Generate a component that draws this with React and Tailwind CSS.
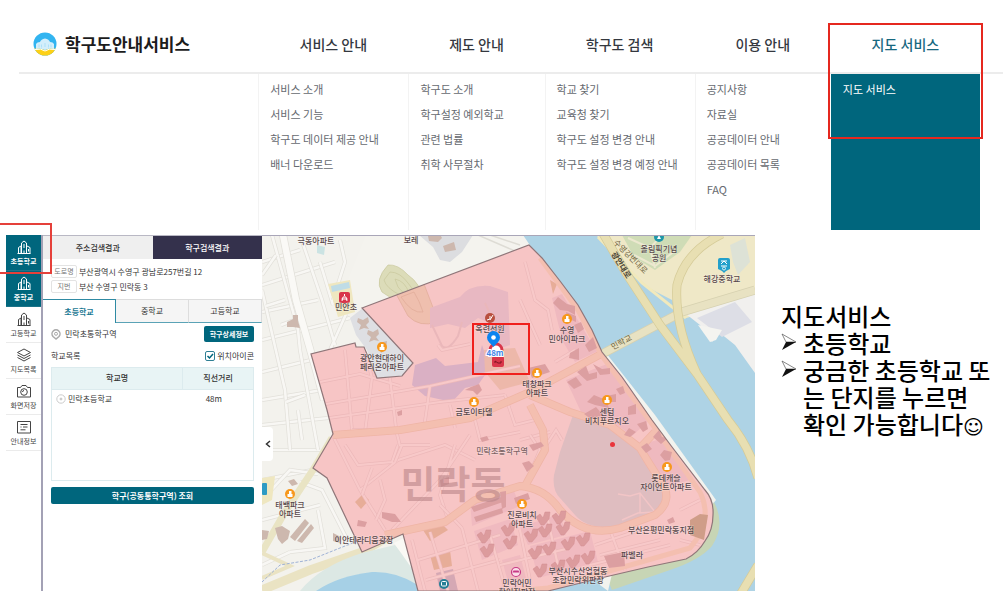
import React, { useState } from 'react'
import clsx from 'clsx'

const menus = [
  { title: '서비스 안내', items: ['서비스 소개', '서비스 기능', '학구도 데이터 제공 안내', '배너 다운로드'] },
  { title: '제도 안내', items: ['학구도 소개', '학구설정 예외학교', '관련 법률', '취학 사무절차'] },
  { title: '학구도 검색', items: ['학교 찾기', '교육청 찾기', '학구도 설정 변경 안내', '학구도 설정 변경 예정 안내'] },
  { title: '이용 안내', items: ['공지사항', '자료실', '공공데이터 안내', '공공데이터 목록', 'FAQ'] },
  { title: '지도 서비스', items: ['지도 서비스'], active: true },
]

const Logo = () => (
  <svg viewBox="0 0 24 24" className="w-6 h-6" aria-hidden="true">
    <clipPath id="logoClip"><circle cx="12" cy="12" r="11.5" /></clipPath>
    <g clipPath="url(#logoClip)">
      <rect width="24" height="24" fill="#32b4f0" />
      <path d="M0 17q6-2 12 1q6-3 12-1v7H0z" fill="#fdd017" />
      <path d="M3 17v-5q1-2 4-2q1-3 5-3.500q4 .5 5 3.500q3 0 4 2v5q-5-1.500-9 1q-4-2.500-9-1z" fill="#d3eefb" />
      <path d="M6 12.500v3M8.500 12.500v3M15.500 12.500v3M18 12.500v3M12 11v4" stroke="#a5dcf6" strokeWidth=".8" fill="none" />
      <path d="M2 17.500q6-1.500 10 1.500q4-3 10-1.500" stroke="#fff" fill="none" />
    </g>
  </svg>
)

const SchoolIcon = () => (
  <path d="M1.500 14.500h13M2.500 14.500V8.500L5 7v7.500M5.500 14.500V4L8 2l2.500 2v10.500M11 7l3 1.500v6M8 14.500v-3M8 5v4M12.500 10v2.500" />
)
const LayersIcon = () => (
  <path d="M8 2l6.500 3.500L8 9 1.500 5.500zM1.500 8L8 11.500 14.500 8M1.500 10.500L8 14l6.500-3.500" />
)
const CameraIcon = () => (
  <>
    <path d="M1.500 4.500h3L6 2.500h4l1.500 2h3V14h-13z" />
    <circle cx="8" cy="9" r="3.300" />
    <path d="M8 7.500a1.500 1.500 0 0 0-1.500 1.500" />
  </>
)
const InfoIcon = () => (
  <path d="M1.500 2.500h13v11.500h-13zM4.500 5.500h7M7 8h4.500M4.500 8h1M4.500 10.800h5" />
)

const tools = [
  { label: '초등학교', icon: <SchoolIcon />, active: true },
  { label: '중학교', icon: <SchoolIcon />, active: true },
  { label: '고등학교', icon: <SchoolIcon /> },
  { label: '지도목록', icon: <LayersIcon /> },
  { label: '화면저장', icon: <CameraIcon /> },
  { label: '안내정보', icon: <InfoIcon /> },
]

const Header = () => (
  <header className="relative pt-[15px] ml-[19px]">
    <div className="grid grid-cols-[239fr_150fr_136fr_150fr_136fr_149fr_23fr] h-[59px] border-b-2 border-[#ececec] items-center">
      <a href="#home" className="flex items-center gap-2 pl-3.5 text-[17px] font-bold text-[#1c1c1c] whitespace-nowrap">
        <Logo />
        학구도안내서비스
      </a>
      {menus.map((menu) => (
        <a
          key={menu.title}
          href="#menu"
          className={clsx('text-center text-sm font-medium whitespace-nowrap', menu.active ? 'text-[#17687f]' : 'text-[#34383f]')}
        >
          {menu.title}
        </a>
      ))}
    </div>
    <nav className="grid grid-cols-[239fr_150fr_136fr_150fr_136fr_149fr_23fr] h-[156px]">
      <div />
      {menus.map((menu) => (
        <ul
          key={menu.title}
          className={clsx(
            'pt-[3px] pl-[11px] border-l text-[11px] leading-[25px] whitespace-nowrap',
            menu.active ? 'bg-[#00667d] border-[#00667d] text-white' : 'border-[#f3f3f3] text-[#666a70]'
          )}
        >
          {menu.items.map((item) => (
            <li key={item}><a href="#item">{item}</a></li>
          ))}
        </ul>
      ))}
    </nav>
    {/* highlight around the map menu */}
    <div className="absolute top-[23px] right-[2%] w-[155px] h-[116px] border-2 border-[#e5281f]" />
  </header>
)

const Sidebar = () => (
  <aside className="relative w-[37px] shrink-0 border-r-2 border-[#a3a1b5]">
    {tools.map((tool) => (
      <button
        key={tool.label}
        type="button"
        className={clsx(
          'w-full h-9 flex flex-col items-center justify-center gap-px border-b text-[7px] leading-[10px] whitespace-nowrap',
          tool.active ? 'bg-[#00667d] border-[#1b7489] text-white font-bold' : 'bg-white border-[#ebebeb] text-[#444]'
        )}
      >
        <svg viewBox="0 0 16 16" className="w-4 h-4" fill="none" stroke="currentColor" strokeWidth="1" aria-hidden="true">
          {tool.icon}
        </svg>
        {tool.label}
      </button>
    ))}
    <div className="absolute -top-3 -left-2 w-[54px] h-[51px] border-2 border-[#e5403a]" />
  </aside>
)

const addresses = [
  ['도로명', '부산광역시 수영구 광남로257번길 12'],
  ['지번', '부산 수영구 민락동 3'],
]

const Panel = () => {
  const [tab, setTab] = useState('초등학교')
  const [showIcon, setShowIcon] = useState(true)

  return (
    <section className="w-[219px] shrink-0 text-[8px] leading-3 text-[#333]">
      <div className="grid grid-cols-2 h-6 border-t border-[#b9b8c4] font-medium">
        <button type="button" className="bg-[#efefef]">주소검색결과</button>
        <button type="button" className="bg-[#34314c] text-white">학구검색결과</button>
      </div>

      <dl className="py-[5px] pl-2">
        {addresses.map(([label, value]) => (
          <div key={label} className="flex items-center h-[15px] gap-0.5">
            <dt className="w-[26px] h-[13px] text-center border border-[#e3e3e3] rounded-xs text-[7px] leading-[11px] text-[#777]">{label}</dt>
            <dd className="whitespace-nowrap">{value}</dd>
          </div>
        ))}
      </dl>

      <div className="grid grid-cols-3 h-6">
        {['초등학교', '중학교', '고등학교'].map((name) => (
          <button
            key={name}
            type="button"
            onClick={() => setTab(name)}
            className={clsx(
              'border-t border-r',
              tab === name
                ? 'bg-white border-[#2f8aa3] text-[#1a7893] font-bold'
                : 'bg-[#f5f5f5] border-t-[#ddd] border-r-[#ddd] border-b border-b-[#5aa3b6]'
            )}
          >
            {name}
          </button>
        ))}
      </div>

      <div className="px-2">
        <div className="flex items-center justify-between h-[22px]">
          <span className="flex items-center gap-1">
            <svg viewBox="0 0 10 11" className="w-2.5 h-[11px]" fill="none" stroke="#aaa" strokeWidth="1.500" aria-hidden="true">
              <path d="M5 10L2 7.500a4 4 0 1 1 6 0z" />
              <circle cx="5" cy="4.800" r="1.500" strokeWidth="1" />
            </svg>
            민락초통학구역
          </span>
          <button type="button" className="w-[50px] h-4 rounded-xs bg-[#00667d] text-white font-bold text-[7px] whitespace-nowrap">
            학구상세정보
          </button>
        </div>
        <div className="flex items-center justify-between h-[22px]">
          <span>학교목록</span>
          <label className="relative flex items-center gap-0.5">
            <input
              type="checkbox"
              checked={showIcon}
              onChange={() => setShowIcon(!showIcon)}
              className="peer appearance-none w-2.5 h-2.5 rounded-xs border border-[#2f7f94] bg-white"
            />
            <svg viewBox="0 0 10 10" className="absolute left-0 w-2.5 h-2.5 hidden peer-checked:block" fill="none" stroke="#00667d" strokeWidth="1.500" aria-hidden="true">
              <path d="M2.500 5l2 2 3.500-4" />
            </svg>
            위치아이콘
          </label>
        </div>

        <div className="h-[114px] border border-[#dcebee]">
          <table className="w-full">
            <thead>
              <tr className="h-[21px] bg-[#e8f4f5] border-b border-[#dcebee]">
                <th className="w-[65%] font-medium border-r border-[#dcebee]">학교명</th>
                <th className="font-medium">직선거리</th>
              </tr>
            </thead>
            <tbody>
              <tr className="h-5">
                <td>
                  <span className="flex items-center gap-0.5 pl-1">
                    <svg viewBox="0 0 10 10" className="w-2.5 h-2.5" fill="none" stroke="#ccc" aria-hidden="true">
                      <circle cx="5" cy="5" r="4.200" />
                      <circle cx="5" cy="5" r="1" fill="#bbb" />
                    </svg>
                    민락초등학교
                  </span>
                </td>
                <td className="text-center pr-2">48m</td>
              </tr>
            </tbody>
          </table>
        </div>

        <button type="button" className="mt-1.5 w-full h-[17px] rounded-xs bg-[#00667d] text-white font-bold">
          학구(공동통학구역) 조회
        </button>
      </div>
    </section>
  )
}

const ZONE =
  'M362 308L529 245L542 258L560 281L578 305L592 330L602 352L622 377L652 420L672 447L705 490Q714 500 713 515Q713 530 705 541Q698 553 686 559L648 567L605 577L548 591H418L403 534L362 552L327 478L313 468L333 434L327 410L311 354L355 343L356 347L364 347L377 378L402 376L413 363Z'

// minor streets outside the school zone
const streets = [
  'M262 285L335 262M262 312L318 300M262 262L300 250M262 340L350 318M262 372L311 360M262 400L322 390M262 425L328 418M262 450L320 450',
  'M300 235L322 300L335 345M272 235L298 330L300 350L318 450M262 290L285 390L290 450M320 262L333 305M346 314L330 350M262 480L312 470',
  'M262 520L320 505M300 482L322 490L350 545M290 552L325 548L318 510M262 565L290 552M262 500L290 470L318 474M340 240L345 262L333 300',
  'M276 255L262 275M285 300L266 306M281 325L300 318M305 395L286 402M298 410L302 440',
]

// streets that run under the tinted zone
const zoneStreets = [
  'M326 404L430 386L520 366M329 418L440 402L505 395M320 382L360 374L400 386M345 350L352 430M365 350L372 378L365 432M390 378L396 428M430 386L424 428',
  'M450 405L455 428M470 400L480 440L520 432M505 395L515 425L535 420M333 436L360 490L385 530M345 445L358 465L392 462L398 445M360 490L398 460L445 445L475 460',
  'M395 462L402 445L430 445M352 430L396 430L400 446M380 480L385 500L376 520M392 530L440 480L470 435M372 468L362 495M455 445L440 495L448 520',
  'M412 540L425 591M430 532L448 591M462 528L478 591M418 560L500 535M426 580L500 560M440 505L462 528',
  'M490 535L506 591M520 530L530 580M548 520L560 575M500 565L570 548M595 545L640 530M600 555L660 540M590 565L670 545M610 530L625 570',
  'M438 345L442 350L470 344M540 455L556 430L562 440M520 440L550 432M525 262L535 300L548 310L552 330M520 300L540 345M555 362L575 350',
  'M530 435L540 450L528 478M680 510L700 500M680 540L700 545',
]

const zoneRoads = 'M333 435L400 430L470 418L530 392L603 353M385 535L445 522L475 500L520 486Q545 488 560 510Q585 538 620 528L655 515Q675 500 660 480Q648 462 640 448L610 425L570 412L530 395M525 486L545 450L543 430L530 405M640 448L655 432'

const buildings = [
  'M358 318l5 2 5-3 1 5-3 3 3 4-5-1-5 2 2-5-4-3zM368 330l5 2 5-3 1 5-3 3 3 4-5-1-5 2 2-5-4-3zM379 343l8-2-1 8-5 4z',
  'M287 322l6-3v-4h5v6l2 7-7-1-6 0zM428 236l12-2 2 4-4 4-9-1zM443 246l11-4 2 8-11 2z',
  'M262 530l7 1-2 8-5 1zM275 528l7-2 8 5-2 8-6 5-4-5zM290 537l15-18 4 4-14 18zM297 541l14-17 3 4-12 15zM288 481l6-2 4 5-6 2zM333 533l8 4-1 6-7-2z',
]

const zoneBuildings = [
  'M553 303l5-6 9 7 8 2v9l-7-4-8-1zM566 312l10 4v6l-9-4zM574 325l7-3 3 7-6 4zM585 345l8-8 4 11-8 4zM570 353l9-5 0 12-10-2z',
  'M528 368l17-4 5 8-18 6zM577 372l9-6 3 8 8-2 0 6-10 3zM593 364l9 5 8-1 0 6-10 1zM606 396l10-2 0 8-8 0zM567 382l9-5 6 8-8 4zM587 402l7-7 12 5 3 8-14-3z',
  'M584 414l12-7 7 8-12 4zM616 389l7-3 2 7-5 2zM628 407l8-3 0 10-8 1zM624 435l5-7 7 4-6 5zM637 424l9-3 2 8-5 3zM641 447l6-4 5 6-6 4zM653 437l6-7 3 7 6 1-7 6zM660 455l4-5 8 2-2 8-5 1z',
  'M529 445l12-3 3 4-11 5zM522 463l7-2 5 5-7 6zM440 480l9-3 0 7-8 3zM480 438l7-2 2 4-7 2zM471 507l30-10 2 5-29 10zM474 517l28-9 1 5-27 9zM500 492l6-1 0 16-4 2zM382 512l13 2 6 8-9 0-10-4z',
  'M465 390l6-3 8-3 3 6-5 5-4-4zM397 412l5-2 0 5-4 1zM358 520l9 2-2 5-8-1zM514 498l14-5 2 6-14 5zM604 556l20-4 1 14-16 2zM667 520l6-3 2 5-6 2z',
]

const vBlocks = [
  [484, 538], [508, 531], [487, 552], [510, 544], [531, 537], [545, 532], [543, 520], [559, 519], [563, 530],
  [535, 554], [549, 550], [568, 545], [583, 541], [540, 572], [558, 568], [573, 563], [588, 559],
]

const places = [
  { x: 316, y: 244, lines: ['극동아파트'] },
  { x: 411, y: 243, lines: ['보레'] },
  { x: 346, y: 310, lines: ['민안초'] },
  { x: 382, y: 361, lines: ['광안현대하이', '페리온아파트'] },
  { x: 490, y: 332, lines: ['옥련선원'] },
  { x: 567, y: 333, lines: ['수영', '민아이파크'] },
  { x: 537, y: 387, lines: ['태창파크', '아파트'] },
  { x: 474, y: 415, lines: ['금토이타델'] },
  { x: 607, y: 415, lines: ['센텀', '비치푸르지오'] },
  { x: 502, y: 454, lines: ['민락초통학구역'], light: true },
  { x: 290, y: 508, lines: ['태백파크', '아파트'] },
  { x: 364, y: 543, lines: ['이안테라디움광장'] },
  { x: 522, y: 518, lines: ['진로비치', '아파트'] },
  { x: 666, y: 481, lines: ['롯데캐슬', '자이언트아파트'] },
  { x: 661, y: 533, lines: ['부산은평민락동지점'] },
  { x: 632, y: 558, lines: ['파벨라'] },
  { x: 578, y: 574, lines: ['부산시수산업협동', '조합민락위판장'] },
  { x: 517, y: 586, lines: ['민락어민', '활어직판장'] },
  { x: 659, y: 252, lines: ['올림픽기념', '공원'] },
  { x: 722, y: 282, lines: ['해강중학교'] },
]

const apartments = [[382, 347], [567, 319], [537, 373], [474, 402], [607, 400], [290, 494], [522, 504], [667, 467]]

const SchoolMap = () => (
  <div className="relative flex-1 min-w-0">
    <svg viewBox="262 235 493 356" className="block w-full h-auto" role="img" aria-label="민락동 학구 지도">
      <rect x="262" y="235" width="493" height="356" fill="#f3f2ed" />

      {/* streets */}
      {streets.map((d) => (
        <g key={d} fill="none">
          <path d={d} stroke="#e2e0da" strokeWidth="4" />
          <path d={d} stroke="#f8f7f4" strokeWidth="2.600" />
        </g>
      ))}
      <path d="M283 235L296 300L316 370L324 400" stroke="#e2e0da" strokeWidth="8" fill="none" />
      <path d="M283 235L296 300L316 370L324 400" stroke="#faf9f6" strokeWidth="6.500" fill="none" />
      <path d="M262 552L285 512L313 470L332 438" stroke="#e9e4c4" strokeWidth="7" fill="none" />
      <path d="M262 590L310 570L362 552L400 530" stroke="#eae3c3" strokeWidth="9" fill="none" />
      <path d="M262 553L290 566L262 578" stroke="#eae3c3" strokeWidth="4" fill="none" />
      <path d="M262 582L280 565L310 560L385 530" stroke="#9fb2d6" strokeWidth="1" strokeDasharray="3 1.500" fill="none" />

      {/* school ground, hill and apartment lots */}
      <path d="M366 235H523L529 245L362 308L340 300Z" fill="#f4f3ee" />
      <path d="M328 284L350 280L355 312L338 317Z" fill="#efe7c0" />
      <path d="M331 286L349 282L350 288L332 292Z" fill="#bfdce6" />
      <path d="M262 478L275 476L272 500L262 505Z" fill="#efe7c0" />
      <path d="M317 245L325 247L324 255L317 253Z" fill="#cbe3e3" />
      <path d="M419 235L473 235L462 252L450 262L440 260L433 247Z" fill="#dcdde0" />
      <path d="M350 318L363 308L413 363L402 376L377 378L367 350L356 335Z" fill="#dedfe3" />
      <path d="M388 265Q398 264 408 275Q420 283 424 300Q436 312 430 322Q416 327 405 314Q396 300 382 292Q374 280 388 265Z" fill="#dcdcb9" stroke="#c9c79c" strokeWidth=".7" />
      <path d="M390 272Q400 272 408 283Q418 295 420 308Q408 308 400 295Q386 288 384 280Z" fill="none" stroke="#c9c79c" strokeWidth=".7" />
      <path d="M395 279Q405 281 409 293Q404 295 398 287Z" fill="none" stroke="#c9c79c" strokeWidth=".7" />
      <path d="M478 235L515 251M490 235L520 245" stroke="#dedcd5" strokeWidth="1.500" fill="none" />
      {buildings.map((d) => <path key={d} d={d} fill="#cdb8ae" />)}

      {/* beach and sea */}
      <path d="M300 591Q320 566 362 553L395 545L412 566L418 591Z" fill="#dce8e4" />
      <path d="M394 543L404 538L413 570Z" fill="#faf9f5" />
      <path d="M316 591Q338 576 372 572Q395 571 416 584L418 591Z" fill="#a6d0e6" />

      {/* river */}
      <path d="M523 235H755V591H540L605 572L713 510L605 355Z" fill="#aed3e5" />
      <path d="M600 356L606 353L655 415L716 500L712 505L655 430Z" fill="#f3f3ee" />
      <path d="M714 502Q726 525 712 546Q700 560 670 570L612 590L605 574L690 552Z" fill="#c7d5b5" />
      <path d="M600 577L612 574L608 591L600 585Z" fill="#f3f3ee" />

      {/* east bank */}
      <path d="M596 235H755V300L686 318L640 280L628 268Z" fill="#efe8c7" />
      <path d="M641 284L672 300L678 318L665 315Z" fill="#aed3e5" />
      <path d="M686 314L755 291V373L735 345L720 333L712 342L700 325Z" fill="#f1f0ee" />
      <path d="M697 318L735 302L752 322L722 337Z" fill="#dddee6" />
      <path d="M698 325L722 330L716 340L710 342Z" fill="#f4f4f0" />
      <path d="M622 235H692L680 252L655 270L634 257Z" fill="#cfdcb6" />
      <path d="M628 238L650 248L662 235M634 255L655 266L676 250M650 248L655 268" stroke="#ece8cf" strokeWidth="2" fill="none" />
      <path d="M730 245L745 238L750 262L738 275L733 262Z" fill="#dde2d6" />
      <path d="M598 237L642 283L686 318" stroke="#f1e9bc" strokeWidth="3" fill="none" />
      <path d="M602 354L682 312L755 290" stroke="#d6d1b0" strokeWidth="9" fill="none" />
      <path d="M602 354L682 312L755 290" stroke="#e8e2c2" strokeWidth="7.500" fill="none" />
      <g fill="none">
        <path d="M601 230L626 273L660 325L697 374L728 420Q750 447 758 478M722 234Q685 252 677 285Q674 325 697 374M758 565L740 595" stroke="#d5cb98" strokeWidth="9" />
        <path d="M601 230L626 273L660 325L697 374L728 420Q750 447 758 478M722 234Q685 252 677 285Q674 325 697 374M758 565L740 595" stroke="#e8dfb2" strokeWidth="7.500" />
      </g>

      {/* school zone */}
      <clipPath id="zoneClip"><path d={ZONE} /></clipPath>
      <path d={ZONE} fill="#f7c5c5" />
      <g clipPath="url(#zoneClip)">
        <path d="M395 292L424 284L434 310L436 322Q420 328 408 316Z" fill="#efbfae" stroke="#dfab98" strokeWidth=".7" />
        <path d="M401 297L414 292Q420 302 423 312Q412 314 401 297Z" fill="none" stroke="#dfab98" strokeWidth=".7" />
        <path d="M430 308L460 297Q470 284 490 286L508 292L510 345L495 350L488 322L478 318L465 328L448 324L430 328Z" fill="#e8b8c2" />
        <path d="M415 365L436 358L445 366L478 362L482 345L490 368L478 385L465 388L452 402L425 396L412 385Z" fill="#dab0c4" />
        <path d="M484 350L515 348L530 382L500 390L485 372Z" fill="#edb8aa" />
        <path d="M432 325L442 346Q448 352 458 336L462 322M485 303L492 318" fill="none" stroke="#eab7ba" strokeWidth="2" />
        {/* apartment lots */}
        <path d="M552 298L562 294L590 340L600 350L575 362L562 340Z" fill="#efb9bf" />
        <path d="M566 380L612 362L652 418L632 436L610 420L582 414Z" fill="#efb9bf" />
        <path d="M640 445L664 438L690 480L660 488Z" fill="#efb9bf" />
        <path d="M470 500L512 486L520 506L472 526ZM474 531L510 519L518 545L482 560ZM520 527L560 514L566 535L528 545ZM530 546L590 531L598 562L538 578ZM502 560L520 555L526 578L508 582Z" fill="#f0bac0" />
        <path d="M436 573L453 569L458 591H440Z" fill="#d5a8b4" />
        <path d="M355 502L363 494L369 500L361 509ZM423 530L440 522L448 530L430 541ZM430 555L450 550L452 566L434 570ZM550 280L557 284L553 294Z" fill="#e7ad98" />
        {zoneStreets.map((d) => (
          <g key={d} fill="none">
            <path d={d} stroke="#ecb8b9" strokeWidth="3.500" />
            <path d={d} stroke="#f8c9c9" strokeWidth="2.200" />
          </g>
        ))}
        {/* hill park */}
        <path d="M573 415L588 416L610 425L640 448L652 470L668 490Q674 506 655 515L620 525Q590 532 575 515L560 498Q552 490 554 475L560 452Z" fill="#dfbdc0" />
        <path d="M618 494L630 496L640 493L655 512L638 513L622 520M640 493V513" fill="none" stroke="#f2c5c6" strokeWidth="1.500" />
        <path d={zoneRoads} stroke="#efb5a6" strokeWidth="8" fill="none" strokeLinejoin="round" />
        <path d={zoneRoads} stroke="#f4bfb0" strokeWidth="6.500" fill="none" strokeLinejoin="round" />
        <path d="M540 258L578 310L602 356L652 424L700 492Q714 520 690 548L620 568L548 588L460 596" stroke="#f4bfb0" strokeWidth="5" fill="none" />
        <path d="M690 520L700 514L708 515L704 540L690 535Z" fill="#cf9d88" />
        {zoneBuildings.map((d) => <path key={d} d={d} fill="#dc9fa1" />)}
        {vBlocks.map(([x, y]) => (
          <path key={`${x}-${y}`} d={`M${x - 7} ${y - 3}l4-3 3 4 2-6 5 0-1 7-5 6-3 0z`} fill="#dc9b9d" stroke="#d28f92" strokeWidth=".5" />
        ))}
      </g>
      <path d={ZONE} fill="none" stroke="#8f7679" strokeWidth="1.200" />

      <text x="453" y="498" textAnchor="middle" fontSize="38" fontWeight="700" fill="#b98487" fillOpacity=".6">민락동</text>

      {/* markers */}
      {apartments.map(([x, y]) => (
        <g key={`${x}-${y}`}>
          <circle cx={x} cy={y} r="5" fill="#f7981d" />
          <path d={`M${x - 2.5} ${y + 3}v-3h1.500v-3h2.500v3h1v3z`} fill="#fff" />
        </g>
      ))}
      <rect x="339" y="292" width="11" height="11" rx="2" fill="#d9364a" />
      <path d="M344.500 294v2M342 301l1-4h3l1 4M341.500 299h6" stroke="#fff" fill="none" />
      <rect x="262" y="483" width="5" height="12" rx="1" fill="#2e9bc4" />
      <path d="M718 260q0-2 2-2h8q2 0 2 2v9l-4 2-2 2-2-2-4-2z" fill="#22a0cb" />
      <path d="M721 261h6M724 261l-3 3M724 261l3 3M721 266h6" stroke="#fff" fill="none" />
      <circle cx="724" cy="268.500" r="1.500" stroke="#fff" fill="none" strokeWidth=".8" />
      <circle cx="659" cy="237" r="5" fill="#1f97a8" />
      <path d="M657 239l2-4 2 4z" fill="#fff" />
      <circle cx="490" cy="318" r="5" fill="#b8503f" />
      <path d="M487 320l3-1v-3M490 320l3-5" stroke="#fff" fill="none" />
      <circle cx="444" cy="584" r="5" fill="#267f96" />
      <rect x="441.500" y="581.500" width="5" height="4.500" rx="1" fill="none" stroke="#fff" />
      <circle cx="516" cy="572" r="4.500" fill="#fbdde8" stroke="#c73a86" strokeWidth="1.200" />
      <path d="M512.500 572.500h7l-1-2h-5z" fill="#c73a86" />
      <circle cx="612.500" cy="444.500" r="2.500" fill="#e9353b" />

      {places.map((place) => (
        <text
          key={place.lines[0]}
          textAnchor="middle"
          fontSize="8"
          fontWeight="500"
          fill={place.light ? '#7d6264' : '#57474a'}
          stroke="#fff"
          strokeOpacity=".35"
          strokeWidth="1"
          paintOrder="stroke"
        >
          {place.lines.map((line, i) => (
            <tspan key={line} x={place.x} y={place.y + i * 9}>{line}</tspan>
          ))}
        </text>
      ))}
      <g fontSize="8" fill="#6d6240">
        <text transform="translate(613 243) rotate(45)">수영강변대로</text>
        <text transform="translate(611 254) rotate(58)" fontWeight="700" fill="#4c4638">광안대로</text>
        <text transform="translate(613 350) rotate(-28)">민락교</text>
      </g>

      {/* selected school */}
      <rect x="492" y="356" width="12" height="11" rx="2" fill="#d9364a" />
      <path d="M495 363v-2l3 2h3v-2" stroke="#7d1521" fill="none" />
      <circle cx="496" cy="350" r="6" fill="#fff" stroke="#d9364a" strokeWidth="3" />
      <circle cx="493.500" cy="337.500" r="6.500" fill="#0b84f0" />
      <path d="M489 342h9l-4.500 5z" fill="#0b84f0" />
      <circle cx="493.500" cy="337.500" r="2.300" fill="#fff" />
      <text x="495" y="356" textAnchor="middle" fontSize="8" fontWeight="700" fill="#4285e8" stroke="#fff" strokeWidth="2" paintOrder="stroke">48m</text>
      <rect x="473" y="324" width="56" height="50" fill="none" stroke="#f0201c" strokeWidth="2" />
      <path d="M262 235.500H755" stroke="#a9a6b8" />
    </svg>
    <button
      type="button"
      aria-label="패널 접기"
      className="absolute left-0 top-[54%] w-[11px] h-[34px] rounded-r-sm bg-white flex items-center justify-center"
    >
      <svg viewBox="0 0 6 8" className="w-1.5 h-2" fill="none" stroke="#333" strokeWidth="1.500" aria-hidden="true">
        <path d="M5 1L1.500 4 5 7" />
      </svg>
    </button>
  </div>
)

const Bullet = () => (
  <svg viewBox="0 0 16 18" className="w-4 h-[18px] mt-1 shrink-0" aria-hidden="true">
    <path d="M1 1l14 8H5z" fill="#fff" stroke="#555" strokeWidth=".7" />
    <path d="M15 9L1 17l4-8z" fill="#111" />
  </svg>
)

const Notes = () => (
  <section className="w-[248px] shrink-0 pt-[67px] pl-[26px] text-2xl leading-[27px] font-medium text-black">
    <h2>지도서비스</h2>
    <ul>
      <li className="flex gap-1.5"><Bullet />초등학교</li>
      <li className="flex gap-1.5">
        <Bullet />
        <p className="whitespace-nowrap">
          궁금한 초등학교 또<br />는 단지를 누르면<br />확인 가능합니다<span className="font-['DejaVu_Sans'] font-normal text-xl leading-5">☺</span>
        </p>
      </li>
    </ul>
  </section>
)

const App = () => (
  <div className="bg-white overflow-hidden font-['Noto_Sans_CJK_KR',sans-serif]">
    <Header />
    <main className="flex mt-[5px] pl-1.5">
      <Sidebar />
      <Panel />
      <SchoolMap />
      <Notes />
    </main>
  </div>
)

export default App
